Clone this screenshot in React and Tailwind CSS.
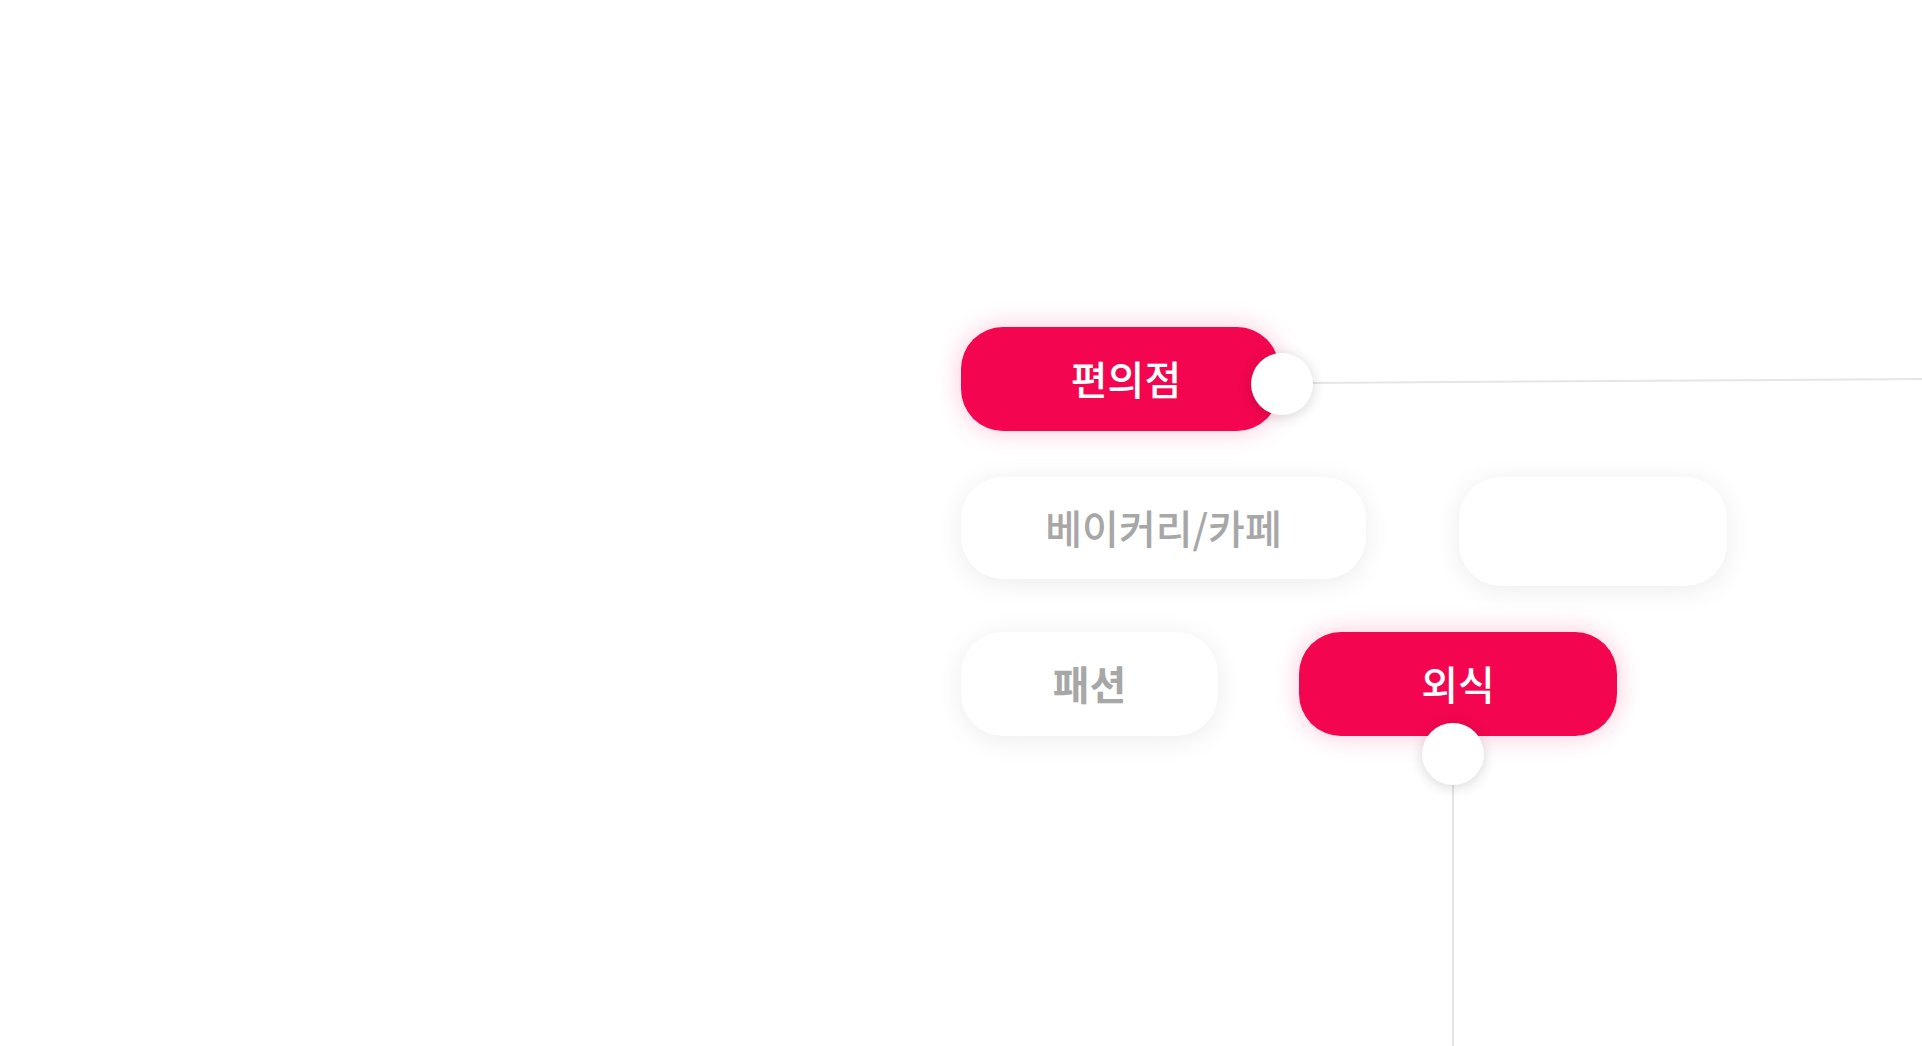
const font = { fontFamily: '"Noto Sans CJK KR", "Noto Sans", sans-serif' };

const Pill = ({ label, active, className = "", children }) => (
    <div
        className={`relative flex items-center justify-center rounded-[42px] text-[40px] font-medium ${active
            ? "bg-[#f3064f] text-white shadow-[0_0_26px_rgba(243,6,79,0.22)]"
            : "bg-white text-[#a7a7a7] shadow-[0_4px_28px_rgba(0,0,0,0.08)]"
            } ${className}`}
    >
        <span className="leading-none pb-[2px]">{label}</span>
        {children}
    </div>
);

const Knob = ({ className = "" }) => (
    <div className={`absolute w-[62px] h-[62px] rounded-full bg-white shadow-[0_2px_14px_rgba(0,0,0,0.16)] ${className}`} />
);

export default function App() {
    return (
        <div className="relative h-[1046px] w-full overflow-hidden bg-white" style={font}>
            {/* connector lines */}
            <div className="absolute left-[1310px] top-[382px] h-[2px] w-[620px] origin-left rotate-[-0.38deg] bg-[#e6e6e6]" />
            <div className="absolute left-[1452px] top-[780px] h-[270px] w-[2px] bg-[#e3e3e3]" />

            <div className="flex flex-col gap-[46px] pl-[961px] pt-[327px]">
                <div className="flex items-start">
                    <Pill label="편의점" active className="w-[318px] h-[104px] pl-[12px] z-10">
                        <Knob className="left-[290px] top-[26px]" />
                    </Pill>
                </div>

                <div className="flex items-start gap-[93px]">
                    <Pill label="베이커리/카페" className="w-[405px] h-[102px]" />
                    <Pill label="" className="w-[268px] h-[109px]" />
                </div>

                <div className="flex items-start gap-[81px]">
                    <Pill label="패션" className="w-[257px] h-[104px] font-semibold" />
                    <Pill label="외식" active className="w-[318px] h-[104px] z-10">
                        <Knob className="left-[123px] top-[91px]" />
                    </Pill>
                </div>
            </div>
        </div>
    );
}
